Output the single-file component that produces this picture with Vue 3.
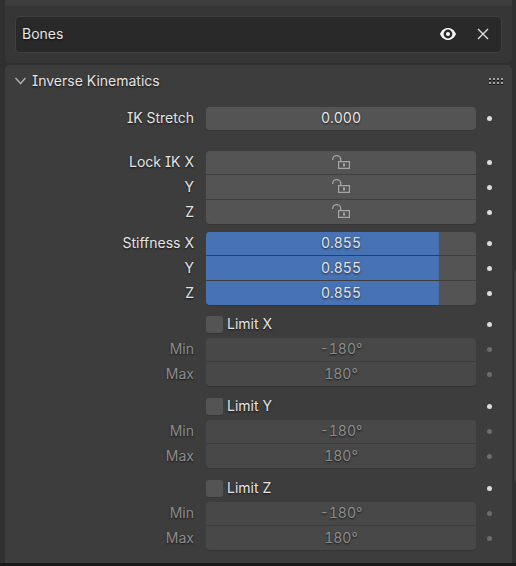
<script setup>
import { reactive, ref } from 'vue'

const open = ref(true)
const stretch = ref('0.000')
const locks = reactive([
  { label: 'Lock IK X', on: false },
  { label: 'Y', on: false },
  { label: 'Z', on: false },
])
const stiffness = reactive([
  { label: 'Stiffness X', value: 0.855 },
  { label: 'Y', value: 0.855 },
  { label: 'Z', value: 0.855 },
])
const limits = reactive(
  ['X', 'Y', 'Z'].map((axis) => ({ axis, on: false, min: '-180°', max: '180°' })),
)
</script>

<template>
  <div class="editor">
    <div class="upper">
      <div class="constraint">
        <span class="name">Bones</span>
        <button class="icon-button" type="button" aria-label="Toggle visibility">
          <svg width="16" height="12" viewBox="0 0 16 12">
            <path
              fill="#f4f4f4"
              fill-rule="evenodd"
              d="M8 0C4.200 0 1.400 2.600 0 6c1.400 3.400 4.200 6 8 6s6.600-2.600 8-6c-1.400-3.400-4.200-6-8-6zM8 1.600a4.400 4.400 0 1 1 0 8.800a4.400 4.400 0 0 1 0-8.800z"
            />
            <circle cx="8" cy="6" r="2.100" fill="#f4f4f4" />
          </svg>
        </button>
        <button class="icon-button" type="button" aria-label="Remove">
          <svg width="12" height="12" viewBox="0 0 12 12">
            <path d="M1 1l10 10M11 1L1 11" stroke="#dedede" stroke-width="1.400" />
          </svg>
        </button>
      </div>
    </div>

    <section class="panel">
      <header class="header">
        <button class="toggle" type="button" :aria-expanded="open" @click="open = !open">
          <svg width="12" height="8" viewBox="0 0 12 8" :class="{ closed: !open }">
            <path d="M.5 1l5 5.500l5-5.500" fill="none" stroke="#b4b4b4" stroke-width="1.300" />
          </svg>
          <span>Inverse Kinematics</span>
        </button>
        <svg class="grip" width="15" height="7" viewBox="0 0 15 7" shape-rendering="crispEdges">
          <g v-for="x in [0, 4, 8, 12]" :key="x">
            <path :d="`M${x} 0h2v2h-2zM${x} 4h2v2h-2z`" fill="#a0a0a0" />
            <path :d="`M${x} 2h2v1h-2zM${x} 6h2v1h-2z`" fill="#151515" />
          </g>
        </svg>
      </header>

      <div v-if="open" class="body">
        <div class="group">
          <div class="row">
            <label class="label" for="stretch">IK Stretch</label>
            <input id="stretch" v-model="stretch" class="field" type="text" />
            <button class="dot" type="button" aria-label="Animate"></button>
          </div>
        </div>

        <div class="group locks">
          <div v-for="(lock, i) in locks" :key="i" class="row">
            <label class="label" :for="`lock-${i}`">{{ lock.label }}</label>
            <button
              :id="`lock-${i}`"
              class="field lock"
              type="button"
              :aria-pressed="lock.on"
              @click="lock.on = !lock.on"
            >
              <svg width="18" height="14" viewBox="0 0 18 14">
                <path
                  :d="lock.on ? 'M8.500 6.500V4a3.500 3.500 0 0 1 7 0v2.500' : 'M.7 5V4.600a4 4 0 0 1 8 0V6.500'"
                  fill="none"
                  stroke="#a6a6a6"
                  stroke-width="1.300"
                />
                <path d="M6.600 6.600h10.800v6.800h-10.800z" fill="none" stroke="#a6a6a6" stroke-width="1.200" />
                <path d="M11 8.500h2v3h-2z" fill="#a6a6a6" />
              </svg>
            </button>
            <button class="dot" type="button" aria-label="Animate"></button>
          </div>
        </div>

        <div class="group">
          <div v-for="(item, i) in stiffness" :key="i" class="row">
            <label class="label" :for="`stiffness-${i}`">{{ item.label }}</label>
            <div class="field slider">
              <input
                :id="`stiffness-${i}`"
                v-model.number="item.value"
                type="range"
                min="0"
                max="0.99"
                step="0.001"
                :style="{ '--fill': item.value }"
              />
              <output :for="`stiffness-${i}`">{{ item.value.toFixed(3) }}</output>
            </div>
            <button class="dot" type="button" aria-label="Animate"></button>
          </div>
        </div>

        <div v-for="limit in limits" :key="limit.axis" class="limit">
          <div class="row check-row">
            <label class="check">
              <input v-model="limit.on" type="checkbox" />
              <span>Limit {{ limit.axis }}</span>
            </label>
            <button class="dot" type="button" aria-label="Animate"></button>
          </div>
          <div class="group">
            <div class="row" :class="{ off: !limit.on }">
              <label class="label" :for="`min-${limit.axis}`">Min</label>
              <input :id="`min-${limit.axis}`" v-model="limit.min" class="field" type="text" :disabled="!limit.on" />
              <button class="dot" type="button" aria-label="Animate" :disabled="!limit.on"></button>
            </div>
            <div class="row" :class="{ off: !limit.on }">
              <label class="label" :for="`max-${limit.axis}`">Max</label>
              <input :id="`max-${limit.axis}`" v-model="limit.max" class="field" type="text" :disabled="!limit.on" />
              <button class="dot" type="button" aria-label="Animate" :disabled="!limit.on"></button>
            </div>
          </div>
        </div>
      </div>
    </section>
    <div class="scrollbar"></div>
  </div>
</template>

<style>
body {
  margin: 0;
  background: #191919;
}
</style>

<style scoped>
.editor {
  position: relative;
  padding: 0 4px 0 5px;
  background: #303030;
  color: #e4e4e4;
  font: 14px/20px Inter, "Noto Sans", sans-serif;
  font-feature-settings: "cv08";
  text-shadow: 0 1px 2px rgba(0, 0, 0, 0.7);
}
button,
input {
  margin: 0;
  padding: 0;
  border: 0;
  background: none;
  color: inherit;
  font: inherit;
  font-feature-settings: inherit;
  text-shadow: inherit;
}
svg {
  display: block;
}
.upper {
  padding: 10px;
  border-top: 6px solid #3d3d3d;
  border-radius: 0 0 5px 5px;
  background: #363636;
}
.constraint {
  display: flex;
  align-items: center;
  box-sizing: border-box;
  height: 37px;
  padding: 0 6px 2px 6px;
  border: 1px solid #404040;
  border-radius: 5px;
  background: #292929;
}
.name {
  flex: 1;
}
.icon-button {
  display: flex;
  align-items: center;
  justify-content: center;
  width: 24px;
  height: 24px;
}
.icon-button + .icon-button {
  margin-left: 11px;
}
.panel {
  margin-top: 2px;
  border-radius: 5px 5px 0 0;
  background: #3d3d3d;
}
.header {
  display: flex;
  align-items: center;
  justify-content: space-between;
  height: 32px;
  padding: 0 8px 0 10px;
}
.toggle {
  display: flex;
  align-items: center;
  gap: 5px;
}
.closed {
  transform: rotate(-90deg);
}
.body {
  display: flex;
  flex-direction: column;
  gap: 8px;
  padding: 10px 10px 13px 10px;
}
.group {
  display: grid;
  grid-template-rows: 23px;
  grid-auto-rows: 24px;
  row-gap: 1px;
}
.locks {
  margin-top: 13px;
}
.row {
  display: grid;
  grid-template-columns: 179px minmax(0, 1fr) 14px;
  column-gap: 12px;
  align-items: stretch;
}
.row > .dot {
  margin-left: -11px;
}
.label {
  align-self: center;
  text-align: right;
}
.field {
  display: flex;
  align-items: center;
  justify-content: center;
  box-sizing: border-box;
  width: 100%;
  height: 100%;
  overflow: hidden;
  background: #545454;
  font-feature-settings: "cv08", "tnum";
  text-align: center;
}
input.field {
  padding-bottom: 2px;
}
.lock {
  align-items: flex-start;
  padding-top: 4px;
}
.group .row:first-child .label,
.group .row:first-child output {
  padding-bottom: 1px;
}
.row:first-child .field {
  border-radius: 4px 4px 0 0;
}
.row:last-child .field {
  border-radius: 0 0 4px 4px;
  box-shadow: 0 1px 0 #353535;
}
.row:only-child .field {
  border-radius: 4px;
}
.slider {
  display: grid;
  grid-template: 100% / 100%;
}
.slider input,
.slider output {
  grid-area: 1 / 1;
}
.slider output {
  align-self: center;
  pointer-events: none;
}
.slider input {
  width: 100%;
  height: 100%;
  appearance: none;
  background: linear-gradient(#4772b3, #4772b3) 0 0 / calc(var(--fill) * 100% + 2px) 100% no-repeat;
}
.slider input::-webkit-slider-thumb {
  appearance: none;
  width: 1px;
  height: 24px;
  background: transparent;
}
.dot {
  display: flex;
  align-items: center;
  justify-content: center;
}
.dot::before {
  content: "";
  width: 5px;
  height: 5px;
  border-radius: 50%;
  background: #dcdcdc;
}
.off {
  color: #8c8c8c;
}
.off .field {
  background: #484848;
}
.off .dot::before {
  background: #6c6c6c;
}
.limit {
  display: grid;
  row-gap: 3px;
}
.limit + .limit {
  margin-top: 1px;
}
.check-row {
  height: 22px;
}
.check {
  display: flex;
  grid-column: 2;
  align-items: center;
  gap: 4px;
}
.check input {
  width: 17px;
  height: 17px;
  border-radius: 3px;
  appearance: none;
  background: #545454;
  box-shadow: 0 1px 0 #353535;
}
.check input:checked {
  background: #4772b3;
}
.scrollbar {
  position: absolute;
  top: 270px;
  right: 0;
  bottom: 80px;
  width: 2px;
  border-radius: 2px 0 0 2px;
  background: #3d3d3d;
}
</style>
